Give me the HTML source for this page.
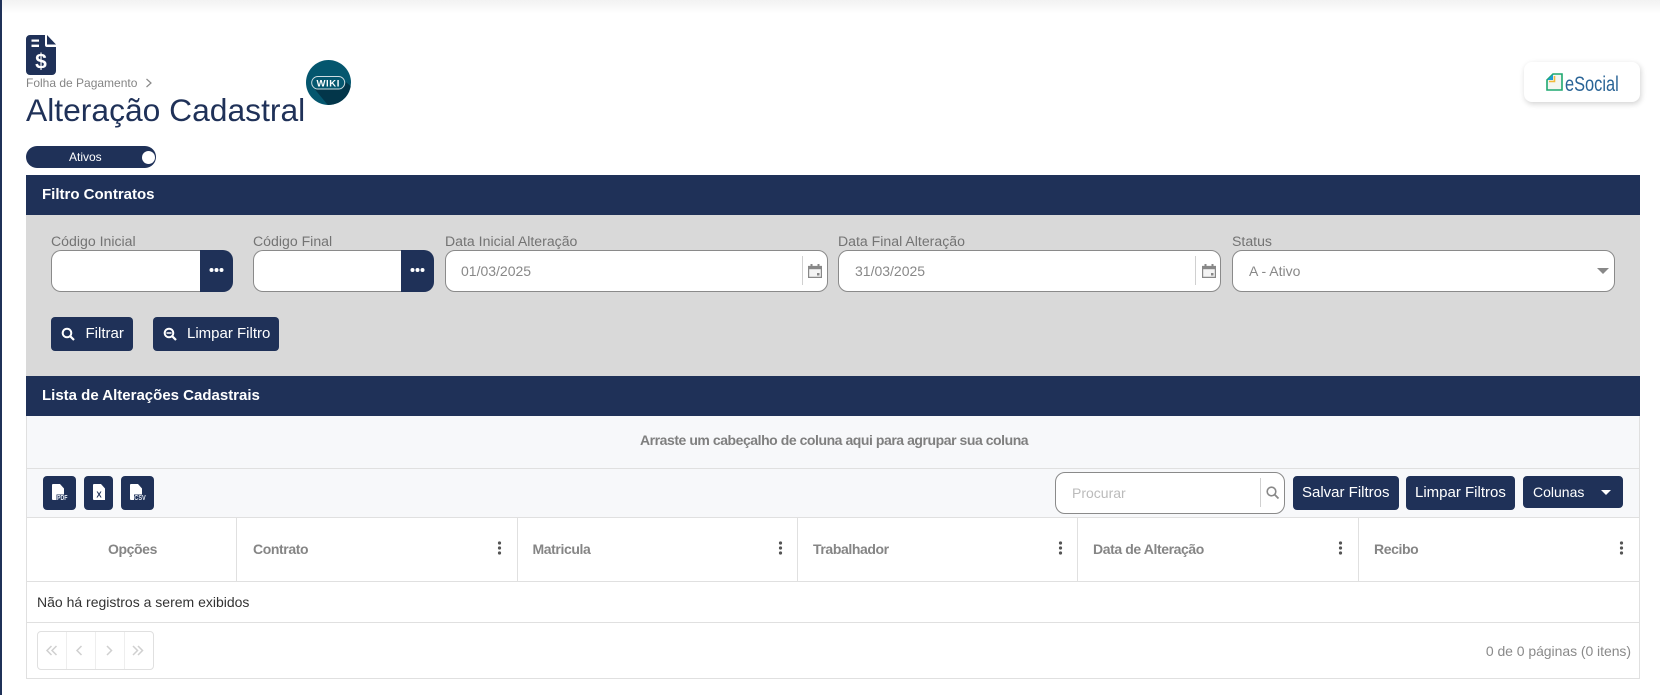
<!DOCTYPE html>
<html lang="pt-BR">
<head>
<meta charset="utf-8">
<title>Alteração Cadastral</title>
<style>
html,body{margin:0;padding:0;width:1660px;height:695px;overflow:hidden;background:#fff;font-family:"Liberation Sans",Arial,sans-serif}
#p{position:relative;width:1660px;height:695px;overflow:hidden;background:#fff}
.a{position:absolute;box-sizing:border-box}
.t{position:absolute;white-space:nowrap;line-height:20px;height:20px}
.navy{background:#1f3158}
.lb{font-size:14.1px;color:#737373}
.inp{position:absolute;box-sizing:border-box;background:#fff;border:1px solid #8a8a8a;border-radius:10px;height:42px;top:250px}
.btn{position:absolute;background:#1f3158;border-radius:4px;color:#fff}
.hd{font-size:14px;font-weight:bold;color:#858585;letter-spacing:-.4px}
.v{position:absolute;top:518px;height:63px;width:1px;background:#e0e0e0}
.kb{position:absolute;top:541px;width:3px;height:14px}
svg{position:absolute;display:block;overflow:visible}
</style>
</head>
<body>
<div id="p">
<div class="a" style="left:0;top:0;width:1660px;height:14px;background:linear-gradient(#f2f2f2,#fff)"></div>
<div class="a navy" style="left:0;top:0;width:2px;height:695px"></div>

<svg style="left:26px;top:35px" width="30" height="40" viewBox="0 0 30 40">
<path fill="#1f3158" d="M4 0H19V10a2 2 0 0 0 2 2H30V36a4 4 0 0 1-4 4H4a4 4 0 0 1-4-4V4a4 4 0 0 1 4-4z"/>
<path fill="#1f3158" d="M21 0L30 9.5H21z"/>
<rect x="5.500" y="4.500" width="7.500" height="2.200" fill="#fff"/>
<rect x="5.500" y="9.600" width="7.500" height="2.400" fill="#fff"/>
<text x="15" y="33.500" text-anchor="middle" font-family="Liberation Sans" font-size="21" font-weight="bold" fill="#fff">$</text>
</svg>
<div class="t" style="left:26px;top:73px;font-size:12px;color:#858585">Folha de Pagamento</div>
<svg style="left:145px;top:78px" width="8" height="10"><path d="M1.500 1L6 5 1.500 9" fill="none" stroke="#8a8a8a" stroke-width="1.200"/></svg>
<div class="t" style="left:26px;top:91px;height:38px;line-height:38px;font-size:31.800px;color:#1f3158">Alteração Cadastral</div>

<svg style="left:306px;top:60px" width="45" height="45" viewBox="0 0 45 45">
<defs><clipPath id="c"><circle cx="22.500" cy="22.500" r="22.500"/></clipPath></defs>
<circle cx="22.500" cy="22.500" r="22.500" fill="#04566e"/>
<path clip-path="url(#c)" fill="#03364a" d="M9 29.500H36L40 22 60 40 40 60 26 50z"/>
<rect x="5.700" y="16.500" width="33" height="12.500" rx="6.200" fill="#04566e" stroke="#cfdde2" stroke-width="1"/>
<text x="22.200" y="26.500" text-anchor="middle" font-family="Liberation Sans" font-weight="bold" font-size="9.500" letter-spacing=".6" fill="#fff">WIKI</text>
</svg>

<div class="a navy" style="left:26px;top:146px;width:130px;height:22px;border-radius:11px"></div>
<div class="t" style="left:69px;top:147px;font-size:12px;color:#fff">Ativos</div>
<div class="a" style="left:141.500px;top:150.500px;width:13px;height:13px;border-radius:50%;background:#fff"></div>

<div class="a navy" style="left:26px;top:175px;width:1614px;height:40px"></div>
<div class="t" style="left:42px;top:185px;font-size:15px;font-weight:bold;color:#fff">Filtro Contratos</div>
<div class="a" style="left:26px;top:215px;width:1614px;height:161px;background:#d9d9d9"></div>

<div class="t lb" style="left:51px;top:231px">Código Inicial</div>
<div class="t lb" style="left:253px;top:231px">Código Final</div>
<div class="t lb" style="left:445px;top:231px">Data Inicial Alteração</div>
<div class="t lb" style="left:838px;top:231px">Data Final Alteração</div>
<div class="t lb" style="left:1232px;top:231px">Status</div>

<div class="inp" style="left:51px;width:150px;border-radius:10px 0 0 10px;border-right:0"></div>
<div class="a navy" style="left:200px;top:250px;width:33px;height:42px;border-radius:0 10px 10px 0"></div>
<svg style="left:209px;top:267px" width="15" height="6"><circle cx="2.500" cy="3" r="2" fill="#fff"/><circle cx="7.500" cy="3" r="2" fill="#fff"/><circle cx="12.500" cy="3" r="2" fill="#fff"/></svg>

<div class="inp" style="left:253px;width:148px;border-radius:10px 0 0 10px;border-right:0"></div>
<div class="a navy" style="left:400.500px;top:250px;width:33.500px;height:42px;border-radius:0 10px 10px 0"></div>
<svg style="left:410px;top:267px" width="15" height="6"><circle cx="2.500" cy="3" r="2" fill="#fff"/><circle cx="7.500" cy="3" r="2" fill="#fff"/><circle cx="12.500" cy="3" r="2" fill="#fff"/></svg>

<div class="inp" style="left:445px;width:383px"></div>
<div class="t" style="left:461px;top:261px;font-size:14px;color:#888">01/03/2025</div>
<div class="a" style="left:802px;top:256px;width:1px;height:29px;background:#d0d0d0"></div>
<svg style="left:808px;top:264px" width="14" height="14" viewBox="0 0 14 14"><path d="M.6 2.500H13.400V13.400H.6z" fill="#f4f4f4" stroke="#888" stroke-width="1.200"/><rect x="0" y="2" width="14" height="3.200" fill="#888"/><rect x="2.500" y="0" width="2" height="3" fill="#888"/><rect x="9.500" y="0" width="2" height="3" fill="#888"/><rect x="9" y="9" width="2.500" height="2.500" fill="#888"/></svg>

<div class="inp" style="left:838px;width:383px"></div>
<div class="t" style="left:855px;top:261px;font-size:14px;color:#888">31/03/2025</div>
<div class="a" style="left:1195px;top:256px;width:1px;height:29px;background:#d0d0d0"></div>
<svg style="left:1201.500px;top:264px" width="14" height="14" viewBox="0 0 14 14"><path d="M.6 2.500H13.400V13.400H.6z" fill="#f4f4f4" stroke="#888" stroke-width="1.200"/><rect x="0" y="2" width="14" height="3.200" fill="#888"/><rect x="2.500" y="0" width="2" height="3" fill="#888"/><rect x="9.500" y="0" width="2" height="3" fill="#888"/><rect x="9" y="9" width="2.500" height="2.500" fill="#888"/></svg>

<div class="inp" style="left:1232px;width:383px"></div>
<div class="t" style="left:1249px;top:261px;font-size:14px;color:#888">A - Ativo</div>
<svg style="left:1597px;top:268px" width="12" height="6"><path d="M0 0H12L6 6z" fill="#888"/></svg>

<div class="btn" style="left:51px;top:317px;width:82px;height:34px"></div>
<svg style="left:61px;top:327px" width="14" height="14" viewBox="0 0 14 14"><circle cx="6" cy="6" r="4.300" fill="none" stroke="#fff" stroke-width="2"/><path d="M9.200 9.200L13 13" stroke="#fff" stroke-width="2.200"/></svg>
<div class="t" style="left:85.500px;top:324px;font-size:15px;color:#fff">Filtrar</div>
<div class="btn" style="left:153px;top:317px;width:126px;height:34px"></div>
<svg style="left:163px;top:327px" width="14" height="14" viewBox="0 0 14 14"><circle cx="6" cy="6" r="4.300" fill="none" stroke="#fff" stroke-width="2"/><path d="M9.200 9.200L13 13" stroke="#fff" stroke-width="2.200"/><path d="M3.500 6H8.500" stroke="#fff" stroke-width="1.500"/></svg>
<div class="t" style="left:187px;top:324px;font-size:15px;color:#fff">Limpar Filtro</div>

<div class="a navy" style="left:26px;top:376px;width:1614px;height:40px"></div>
<div class="t" style="left:42px;top:386px;font-size:15px;font-weight:bold;color:#fff">Lista de Alterações Cadastrais</div>

<div class="a" style="left:26px;top:416px;width:1614px;height:263px;border:1px solid #e0e0e0;border-top:0"></div>
<div class="a" style="left:27px;top:416px;width:1612px;height:53px;background:#f7f8fa;border-bottom:1px solid #e0e0e0"></div>
<div class="t" style="left:640px;top:430px;font-size:14px;font-weight:bold;color:#7f7f7f;letter-spacing:-.45px">Arraste um cabeçalho de coluna aqui para agrupar sua coluna</div>
<div class="a" style="left:27px;top:469px;width:1612px;height:49px;background:#f7f8fa;border-bottom:1px solid #e0e0e0"></div>

<div class="btn" style="left:43px;top:476px;width:33px;height:34px"></div>
<svg style="left:51.500px;top:484px" width="16" height="17" viewBox="0 0 16 17"><path fill="#fff" d="M1 0H8L12 4.500V16H1a1 1 0 0 1-1-1V1a1 1 0 0 1 1-1z"/><rect x="4.500" y="10.500" width="11" height="6" fill="#1f3158"/><text x="5" y="16" textLength="10.500" lengthAdjust="spacingAndGlyphs" font-family="Liberation Sans" font-weight="bold" font-size="7" fill="#e8eef6">PDF</text></svg>
<div class="btn" style="left:84px;top:476px;width:29px;height:34px"></div>
<svg style="left:93px;top:484px" width="12" height="16" viewBox="0 0 12 16"><path fill="#fff" d="M1 0H8L12 4.500V16H1a1 1 0 0 1-1-1V1a1 1 0 0 1 1-1z"/><text x="6" y="13.500" text-anchor="middle" font-family="Liberation Sans" font-weight="bold" font-size="8" fill="#1f3158">X</text></svg>
<div class="btn" style="left:121px;top:476px;width:33px;height:34px"></div>
<svg style="left:130px;top:484px" width="16" height="17" viewBox="0 0 16 17"><path fill="#fff" d="M1 0H8L12 4.500V16H1a1 1 0 0 1-1-1V1a1 1 0 0 1 1-1z"/><rect x="4" y="10.500" width="12" height="6" fill="#1f3158"/><text x="4.300" y="16" textLength="11.500" lengthAdjust="spacingAndGlyphs" font-family="Liberation Sans" font-weight="bold" font-size="7" fill="#e8eef6">CSV</text></svg>

<div class="a" style="left:1055px;top:472px;width:230px;height:42px;background:#fff;border:1px solid #8a8a8a;border-radius:10px"></div>
<div class="t" style="left:1072px;top:483px;font-size:14px;color:#bbb">Procurar</div>
<div class="a" style="left:1260px;top:478px;width:1px;height:29px;background:#d0d0d0"></div>
<svg style="left:1266px;top:486px" width="13" height="13" viewBox="0 0 13 13"><circle cx="5.500" cy="5.500" r="4.300" fill="none" stroke="#888" stroke-width="1.600"/><path d="M8.800 8.800L12.500 12.500" stroke="#888" stroke-width="1.800"/></svg>

<div class="btn" style="left:1293px;top:476px;width:105.500px;height:34px"></div>
<div class="t" style="left:1302px;top:483px;font-size:15px;color:#fff">Salvar Filtros</div>
<div class="btn" style="left:1405.500px;top:476px;width:109.500px;height:34px"></div>
<div class="t" style="left:1415px;top:483px;font-size:15px;color:#fff">Limpar Filtros</div>
<div class="btn" style="left:1523px;top:476px;width:99.500px;height:32px"></div>
<div class="t" style="left:1533px;top:482px;font-size:14px;color:#fff">Colunas</div>
<svg style="left:1601px;top:490px" width="10" height="5"><path d="M0 0H10L5 5z" fill="#fff"/></svg>

<div class="v" style="left:236px"></div>
<div class="v" style="left:517px"></div>
<div class="v" style="left:797px"></div>
<div class="v" style="left:1077px"></div>
<div class="v" style="left:1358px"></div>
<div class="a" style="left:27px;top:581px;width:1612px;height:1px;background:#e0e0e0"></div>
<div class="a" style="left:27px;top:622px;width:1612px;height:1px;background:#e0e0e0"></div>

<div class="t hd" style="left:108px;top:539px">Opções</div>
<div class="t hd" style="left:253px;top:539px">Contrato</div>
<div class="t hd" style="left:532.500px;top:539px">Matricula</div>
<div class="t hd" style="left:813px;top:539px">Trabalhador</div>
<div class="t hd" style="left:1093px;top:539px">Data de Alteração</div>
<div class="t hd" style="left:1374px;top:539px">Recibo</div>

<svg class="kb" style="left:498px" viewBox="0 0 3 14"><circle cx="1.500" cy="2" r="1.600" fill="#555"/><circle cx="1.500" cy="7" r="1.600" fill="#555"/><circle cx="1.500" cy="12" r="1.600" fill="#555"/></svg>
<svg class="kb" style="left:779px" viewBox="0 0 3 14"><circle cx="1.500" cy="2" r="1.600" fill="#555"/><circle cx="1.500" cy="7" r="1.600" fill="#555"/><circle cx="1.500" cy="12" r="1.600" fill="#555"/></svg>
<svg class="kb" style="left:1058.500px" viewBox="0 0 3 14"><circle cx="1.500" cy="2" r="1.600" fill="#555"/><circle cx="1.500" cy="7" r="1.600" fill="#555"/><circle cx="1.500" cy="12" r="1.600" fill="#555"/></svg>
<svg class="kb" style="left:1338.500px" viewBox="0 0 3 14"><circle cx="1.500" cy="2" r="1.600" fill="#555"/><circle cx="1.500" cy="7" r="1.600" fill="#555"/><circle cx="1.500" cy="12" r="1.600" fill="#555"/></svg>
<svg class="kb" style="left:1619.500px" viewBox="0 0 3 14"><circle cx="1.500" cy="2" r="1.600" fill="#555"/><circle cx="1.500" cy="7" r="1.600" fill="#555"/><circle cx="1.500" cy="12" r="1.600" fill="#555"/></svg>

<div class="t" style="left:37px;top:592px;font-size:14px;color:#333">Não há registros a serem exibidos</div>

<div class="a" style="left:37px;top:631px;width:117px;height:39px;border:1px solid #e0e0e0;border-radius:4px"></div>
<div class="a" style="left:66px;top:632px;width:1px;height:37px;background:#eeeeee"></div>
<div class="a" style="left:95px;top:632px;width:1px;height:37px;background:#eeeeee"></div>
<div class="a" style="left:124px;top:632px;width:1px;height:37px;background:#eeeeee"></div>
<svg style="left:46px;top:645px" width="100" height="11"><g fill="none" stroke="#d0d0d0" stroke-width="1.500"><path d="M5.500 1L1 5.500 5.500 10M10.500 1L6 5.500 10.500 10"/><path d="M35.500 1L31 5.500 35.500 10"/><path d="M61 1L65.500 5.500 61 10"/><path d="M87 1L91.500 5.500 87 10M92 1L96.500 5.500 92 10"/></g></svg>

<div class="t" style="right:29px;top:641px;font-size:14px;color:#8a8a8a;letter-spacing:-.05px">0 de 0 páginas (0 itens)</div>

<div class="a" style="left:1524px;top:62px;width:116px;height:40px;background:#fff;border-radius:8px;box-shadow:1px 2px 6px rgba(0,0,0,.18)"></div>
<svg style="left:1546px;top:73px" width="17" height="18" viewBox="0 0 17 18"><path d="M1 17V7L7 1H16V17z" fill="#f3f5f1" stroke="#1fa870" stroke-width="1.600"/><path d="M1.500 7L7 1.500V7z" fill="#1e9ad6"/><path d="M3 8.500H8.500V3" fill="none" stroke="#f0b93a" stroke-width="1.600"/></svg>
<div class="t" style="left:1565px;top:75px;font-size:21px;color:#2a6496;transform:scaleX(.78);transform-origin:0 50%">eSocial</div>
</div>
</body>
</html>
